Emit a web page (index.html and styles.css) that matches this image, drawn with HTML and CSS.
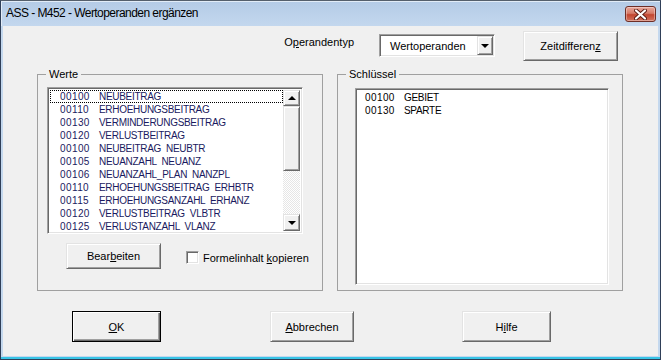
FILE: index.html
```html
<!DOCTYPE html>
<html lang="de">
<head>
    <meta charset="UTF-8">
    <title>ASS - M452 - Wertoperanden ergänzen</title>
    <link rel="stylesheet" href="styles.css">
</head>
<body>
<div class="window">
    <div class="titlebar">
        <span class="title">ASS - M452 - Wertoperanden ergänzen</span>
        <button class="close">
            <svg width="13" height="11" viewBox="0 0 13 11">
                <path d="M2 1.5 L11 9.5 M11 1.5 L2 9.5" stroke="#5a1a12" stroke-width="4" stroke-linecap="round"/>
                <path d="M2 1.5 L11 9.5 M11 1.5 L2 9.5" stroke="#fff" stroke-width="2.2" stroke-linecap="round"/>
            </svg>
        </button>
    </div>

    <div class="client">
        <div class="toprow">
            <span class="label">O<u>p</u>erandentyp</span>
            <div class="combo">
                <span class="combo-text">Wertoperanden</span>
                <span class="drop"><i class="arrow-down"></i></span>
            </div>
            <button class="btn btn-zeit">Zeitdifferen<u>z</u></button>
        </div>

        <div class="groups">
            <div class="group">
                <span class="group-title">Werte</span>
                <div class="list list-werte">
                    <div class="items">
                        <div class="item focus"><span class="code">00100</span>NEUBEITRAG</div>
                        <div class="item"><span class="code">00110</span>ERHOEHUNGSBEITRAG</div>
                        <div class="item"><span class="code">00130</span>VERMINDERUNGSBEITRAG</div>
                        <div class="item"><span class="code">00120</span>VERLUSTBEITRAG</div>
                        <div class="item"><span class="code">00100</span>NEUBEITRAG  NEUBTR</div>
                        <div class="item"><span class="code">00105</span>NEUANZAHL  NEUANZ</div>
                        <div class="item"><span class="code">00106</span>NEUANZAHL_PLAN  NANZPL</div>
                        <div class="item"><span class="code">00110</span>ERHOEHUNGSBEITRAG  ERHBTR</div>
                        <div class="item"><span class="code">00115</span>ERHOEHUNGSANZAHL  ERHANZ</div>
                        <div class="item"><span class="code">00120</span>VERLUSTBEITRAG  VLBTR</div>
                        <div class="item"><span class="code">00125</span>VERLUSTANZAHL  VLANZ</div>
                    </div>
                    <div class="scrollbar">
                        <span class="sb-btn sb-up"><i class="arrow-up"></i></span>
                        <span class="sb-thumb"></span>
                        <span class="sb-track"></span>
                        <span class="sb-btn sb-down"><i class="arrow-down"></i></span>
                    </div>
                </div>
                <div class="group-actions">
                    <button class="btn btn-edit">Bear<u>b</u>eiten</button>
                    <span class="checkbox"></span>
                    <span class="check-label">Formelinhalt <u>k</u>opieren</span>
                </div>
            </div>

            <div class="group">
                <span class="group-title">Schlüssel</span>
                <div class="list list-keys">
                    <div class="items">
                        <div class="item"><span class="code">00100</span>GEBIET</div>
                        <div class="item"><span class="code">00130</span>SPARTE</div>
                    </div>
                </div>
            </div>
        </div>

        <div class="bottomrow">
            <button class="btn btn-default"><u>O</u>K</button>
            <button class="btn btn-cancel"><u>A</u>bbrechen</button>
            <button class="btn btn-help">H<u>i</u>lfe</button>
        </div>
    </div>
    <div class="bottom-edge"></div>
</div>
</body>
</html>
```

FILE: styles.css
```css
* {
    margin: 0;
    padding: 0;
    box-sizing: border-box;
}

html, body {
    width: 100%;
    height: 100%;
    overflow: hidden;
}

body {
    font-family: "Liberation Sans", Arial, sans-serif;
    font-size: 11px;
    color: #000;
    background: #c4d8ee;
}

u {
    text-decoration: underline;
    text-underline-offset: 1px;
}

.window {
    width: 661px;
    height: 360px;
    border: 1px solid #2f3f58;
    border-top-color: #555f6c;
    background: #c4d8ee;
    display: flex;
    flex-direction: column;
}

/* title bar */
.titlebar {
    height: 25px;
    display: flex;
    align-items: flex-start;
    justify-content: space-between;
    background: linear-gradient(#b4cbe6, #c3d7ee);
    box-shadow: inset 1px 1px #e2ecf7;
}

.title {
    font-size: 12px;
    letter-spacing: -0.55px;
    line-height: 25px;
    padding-left: 5px;
    color: #000;
}

.close {
    width: 31px;
    height: 16px;
    margin: 5px 4px 0 0;
    border: 1px solid #6e2e26;
    border-radius: 3px;
    background: linear-gradient(#e8a89c, #d67b68 45%, #c2452f 55%, #d2735f);
    box-shadow: inset 0 0 0 1px rgba(255, 255, 255, 0.35);
    display: flex;
    align-items: center;
    justify-content: center;
}

/* client area */
.client {
    height: 330px;
    margin: 0 2px;
    background: #f0f0f0;
    display: flex;
    flex-direction: column;
}

.bottom-edge {
    height: 3px;
    border-top: 1px solid #c4d8ee;
    background: #38c4e6;
}

.toprow {
    display: flex;
    justify-content: flex-end;
    align-items: flex-start;
    padding: 5px 40px 0 0;
    height: 35px;
}

.toprow .label {
    margin: 5px 25px 0 0;
    line-height: 13px;
}

.combo {
    width: 116px;
    height: 23px;
    margin: 3px 28px 0 0;
    background: #fff;
    border: 1px solid;
    border-color: #a0a0a0 #fff #fff #a0a0a0;
    box-shadow: inset 1px 1px #696969, inset -1px -1px #e3e3e3;
    display: flex;
    align-items: center;
    padding: 1px 1px 1px 10px;
}

.combo-text {
    flex: 1;
}

.drop {
    width: 16px;
    height: 19px;
    background: #f0f0f0;
    border: 1px solid;
    border-color: #e3e3e3 #696969 #696969 #e3e3e3;
    box-shadow: inset 1px 1px #fff, inset -1px -1px #a0a0a0;
    display: flex;
    align-items: center;
    justify-content: center;
}

.arrow-down {
    width: 0;
    height: 0;
    border-left: 4px solid transparent;
    border-right: 4px solid transparent;
    border-top: 4px solid #000;
}

.arrow-up {
    width: 0;
    height: 0;
    border-left: 4px solid transparent;
    border-right: 4px solid transparent;
    border-bottom: 4px solid #000;
}

/* buttons */
.btn {
    font-family: inherit;
    font-size: 11px;
    color: #000;
    background: #f0f0f0;
    border: 1px solid;
    border-color: #e3e3e3 #696969 #696969 #e3e3e3;
    box-shadow: inset 1px 1px #fff, inset -1px -1px #a0a0a0;
}

.btn-zeit {
    width: 95px;
    height: 30px;
}

/* group boxes */
.groups {
    display: flex;
    gap: 14px;
    padding-left: 34px;
    margin-top: 13px;
}

.group {
    width: 286px;
    height: 217px;
    border: 1px solid #a0a0a0;
    display: flex;
    flex-direction: column;
    align-items: flex-start;
}

.group-title {
    margin: -7px 0 0 8px;
    padding: 0 3px;
    line-height: 13px;
    background: #f0f0f0;
}

.list {
    background: #fff;
    border: 1px solid;
    border-color: #a0a0a0 #fff #fff #a0a0a0;
    box-shadow: inset 1px 1px #696969, inset -1px -1px #e3e3e3;
    padding: 2px;
    display: flex;
}

.list-werte {
    width: 256px;
    height: 147px;
    margin: 6px 0 0 9px;
    color: #1a1a60;
}

.list-keys {
    width: 254px;
    height: 197px;
    margin: 7px 0 0 17px;
    padding-left: 9px;
}

.items {
    flex: 1;
}

.item {
    height: 13px;
    line-height: 13px;
    font-size: 10px;
    letter-spacing: -0.3px;
    white-space: pre;
    padding-left: 10px;
}

.list-keys .item {
    padding-left: 0;
}

.item.focus {
    outline: 1px dotted #000;
    outline-offset: -1px;
}

.code {
    display: inline-block;
    width: 39px;
    letter-spacing: 0.4px;
}

/* scrollbar */
.scrollbar {
    width: 17px;
    display: flex;
    flex-direction: column;
}

.sb-btn,
.sb-thumb {
    background: #f0f0f0;
    border: 1px solid;
    border-color: #e3e3e3 #696969 #696969 #e3e3e3;
    box-shadow: inset 1px 1px #fff, inset -1px -1px #a0a0a0;
    display: flex;
    align-items: center;
    justify-content: center;
}

.sb-up {
    height: 16px;
}

.sb-thumb {
    height: 66px;
}

.sb-track {
    height: 44px;
    background: repeating-conic-gradient(#fff 0 25%, #e6e6e6 0 50%) 0 0 / 2px 2px;
}

.sb-down {
    height: 17px;
}

.group-actions {
    display: flex;
    align-items: center;
    margin: 9px 0 0 28px;
}

.btn-edit {
    width: 95px;
    height: 26px;
}

.checkbox {
    width: 13px;
    height: 13px;
    margin: 2px 4px 0 25px;
    background: #fff;
    border: 1px solid;
    border-color: #a0a0a0 #fff #fff #a0a0a0;
    box-shadow: inset 1px 1px #696969, inset -1px -1px #e3e3e3;
}

.check-label {
    margin-top: 3px;
}

/* dialog buttons */
.bottomrow {
    display: flex;
    padding-left: 69px;
    margin-top: 20px;
}

.bottomrow .btn {
    height: 31px;
}

.btn-default {
    width: 89px;
    border: 1px solid #000;
    box-shadow: inset 1px 1px #fff, inset -1px -1px #696969, inset -2px -2px #a0a0a0;
}

.btn-cancel {
    width: 84px;
    margin-left: 109px;
}

.btn-help {
    width: 89px;
    margin-left: 108px;
}
```
